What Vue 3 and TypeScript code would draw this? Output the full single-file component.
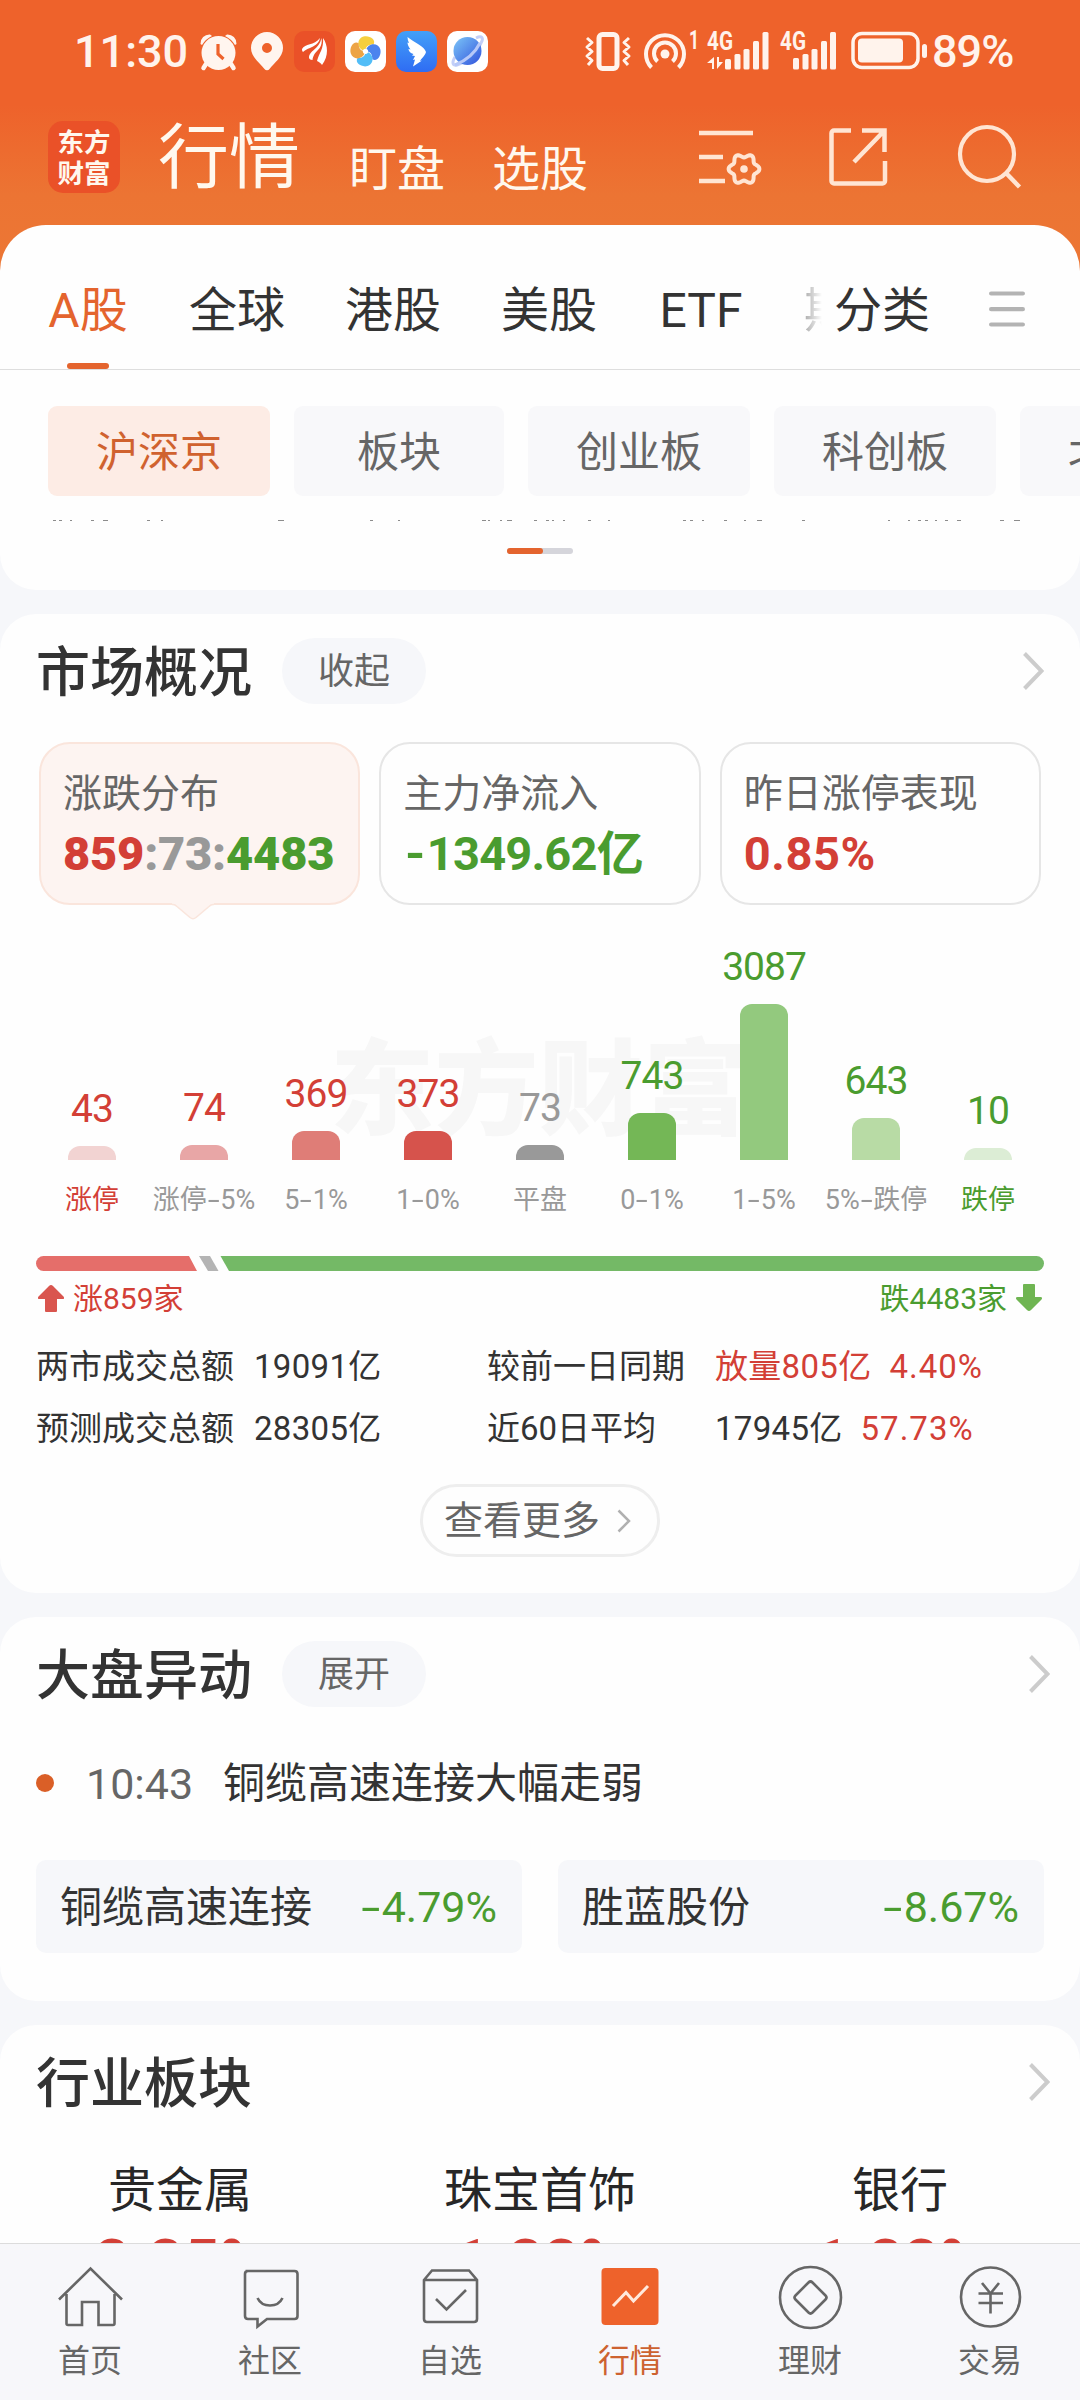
<script setup lang="ts">
interface Bucket {
  value: number
  label: string
  height: number
  fill: string
  tone: string
  labelTone: string
}

const tabs: { name: string; width: number; active?: boolean }[] = [
  { name: 'A股', width: 80, active: true },
  { name: '全球', width: 96 },
  { name: '港股', width: 96 },
  { name: '美股', width: 96 },
  { name: 'ETF', width: 88 },
]

const chips: { name: string; active?: boolean }[] = [
  { name: '沪深京', active: true },
  { name: '板块' },
  { name: '创业板' },
  { name: '科创板' },
  { name: '北交所' },
]

const buckets: Bucket[] = [
  { value: 43, label: '涨停', height: 14, fill: '#f2d3d2', tone: 'up', labelTone: 'up' },
  { value: 74, label: '涨停-5%', height: 15, fill: '#e8a6a6', tone: 'up', labelTone: 'flat' },
  { value: 369, label: '5-1%', height: 29, fill: '#df7d77', tone: 'up', labelTone: 'flat' },
  { value: 373, label: '1-0%', height: 29, fill: '#d6534c', tone: 'up', labelTone: 'flat' },
  { value: 73, label: '平盘', height: 15, fill: '#999999', tone: 'flat', labelTone: 'flat' },
  { value: 743, label: '0-1%', height: 47, fill: '#74b756', tone: 'down', labelTone: 'flat' },
  { value: 3087, label: '1-5%', height: 156, fill: '#93c97e', tone: 'down', labelTone: 'flat' },
  { value: 643, label: '5%-跌停', height: 42, fill: '#b8dba5', tone: 'down', labelTone: 'flat' },
  { value: 10, label: '跌停', height: 12, fill: '#dcedd5', tone: 'down', labelTone: 'down' },
]

const movers = [
  { name: '铜缆高速连接', change: '-4.79%' },
  { name: '胜蓝股份', change: '-8.67%' },
]

const sectors = [
  { name: '贵金属', change: '2.25%' },
  { name: '珠宝首饰', change: '1.22%' },
  { name: '银行', change: '1.22%' },
]

// x offset and width of the ticker fragments peeking out under the chips
const peeks: number[][] = [
  [53, 3], [59, 3], [70, 2], [91, 3], [103, 5], [147, 3], [161, 2], [278, 6], [370, 3], [398, 2],
  [482, 4], [488, 2], [500, 2], [507, 5], [534, 3], [546, 3], [552, 2], [563, 2], [588, 3], [608, 2],
  [683, 3], [690, 3], [702, 2], [724, 3], [744, 2], [757, 5], [802, 3], [888, 2], [908, 2], [918, 3],
  [925, 3], [935, 2], [945, 3], [957, 4], [1000, 4], [1014, 6],
]

// keeps the minus as its own piece so it can be drawn wider than the font's hyphen
const pieces = (text: string): string[] => text.split(/(-)/).filter(Boolean)

// six-lobed outline of the settings gear
const gear = Array.from({ length: 96 }, (_, i) => {
  const a = (i / 96) * Math.PI * 2
  const r = 13.5 + 1.9 * Math.cos(6 * a)
  return `${(744 + r * Math.cos(a)).toFixed(2)},${(169 + r * Math.sin(a)).toFixed(2)}`
}).join(' ')
</script>

<template>
  <div class="screen">
    <div class="status">
      <span class="clock">11:30</span>
      <svg class="status-left" width="296" height="48" viewBox="196 28 296 48">
        <defs>
          <linearGradient id="blue" x1="0" y1="0" x2="0" y2="1">
            <stop offset="0" stop-color="#43a0f8" /><stop offset="1" stop-color="#2f6cf3" />
          </linearGradient>
          <linearGradient id="planet" x1="0" y1="0" x2="1" y2="1">
            <stop offset="0" stop-color="#7cc6f8" /><stop offset="1" stop-color="#3152dc" />
          </linearGradient>
        </defs>
        <g fill="#fff5ef">
          <circle cx="218.500" cy="53" r="17" />
          <path d="M200.500 44a9 9 0 0 1 9.500-9.500l2 1.500a23 23 0 0 0-10 9zM236.500 44a9 9 0 0 0-9.500-9.500l-2 1.500a23 23 0 0 1 10 9z" />
          <path d="M206 64l-2.500 4M231 64l2.500 4" stroke="#fff5ef" stroke-width="4.500" stroke-linecap="round" />
          <path d="M218 44v10l5.500 5" fill="none" stroke="#ee622b" stroke-width="3.200" />
          <path fill-rule="evenodd" d="M267 32a16 16 0 0 0-16 16c0 9 9 15 13.500 21a3 3 0 0 0 5 0C274 63 283 57 283 48a16 16 0 0 0-16-16zm0 11a5 5 0 1 1 0 10 5 5 0 0 1 0-10z" />
        </g>
        <rect x="294" y="31" width="41" height="41" rx="10" fill="#ea5128" />
        <g fill="#fff">
          <path d="M302 49c3-6 12-3 18-11-1 6-6 8-10 10-3 1-5 2-7 4-1-1-1-2-1-3z" />
          <path d="M309 58c0-8 10-8 12.500-20 1.500 9-4 12-7 16-1 2-2 4-2 6-2 0-3-1-3.500-2z" />
          <path d="M317 61c2-8 7-12 6-23 5 7 6 18-1 27-1-2-3-3-5-4z" />
        </g>
        <rect x="345" y="31" width="41" height="41" rx="10" fill="#fff" />
        <g>
          <path id="petal" d="M365.500 51c-8-1-10-12-2-14.500 6-1.500 13 3 10 8-4 0-8 1-8 6.500z" fill="#f6cf3e" />
          <path d="M365.500 51c-8-1-10-12-2-14.500 6-1.500 13 3 10 8-4 0-8 1-8 6.500z" fill="#4b83ee" transform="rotate(90 365.500 51.300)" />
          <path d="M365.500 51c-8-1-10-12-2-14.500 6-1.500 13 3 10 8-4 0-8 1-8 6.500z" fill="#52bdf7" transform="rotate(180 365.500 51.300)" />
          <path d="M365.500 51c-8-1-10-12-2-14.500 6-1.500 13 3 10 8-4 0-8 1-8 6.500z" fill="#eda444" transform="rotate(270 365.500 51.300)" />
        </g>
        <circle cx="365.500" cy="51.300" r="2.600" fill="#fff" />
        <rect x="396" y="31" width="41" height="41" rx="10" fill="url(#blue)" />
        <path d="M407.500 37c7 6 17 9 18.500 15-1 4-5 7-6 9l2-.500-9 6 2-7-2 .500 2-4-3-.500 1.500-1.500c-4-1-5-4-5-5l2 .500c-2-3-3-5-3-7l1.500.500c-1-2-1.500-4-1.500-6z" fill="#fff" />
        <rect x="447" y="31" width="41" height="41" rx="10" fill="#fff" />
        <path d="M476 38c6-3 8 0 5 5-5 10-15 19-24 22-5 1-5-3-2-8" fill="none" stroke="#c3cff8" stroke-width="3" />
        <circle cx="467.500" cy="51" r="14" fill="url(#planet)" />
        <path d="M480 43c-5 10-15 18-25 22" fill="none" stroke="#b7c8f8" stroke-width="3" />
      </svg>
      <svg class="status-right" width="350" height="48" viewBox="580 28 350 48">
        <g fill="none" stroke="#fff3ec">
          <rect x="599" y="34.500" width="18" height="34" rx="3.500" stroke-width="5" />
          <path d="M587 38l5 4.500-5 4.500 5 4.500-5 4.500 5 4.500-4 4.500M629 38l-5 4.500 5 4.500-5 4.500 5 4.500-5 4.500 4 4.500" stroke-width="3" stroke-linejoin="round" />
          <path d="M651.500 67.500a19 19 0 1 1 27 0M657.500 61.500a11 11 0 1 1 15 0" stroke-width="4" />
          <rect x="853" y="33.500" width="65" height="34" rx="9" stroke-width="3.500" />
        </g>
        <g fill="#fff3ec">
          <circle cx="665" cy="54" r="4.500" />
          <rect x="858" y="38.500" width="45" height="24" rx="4" />
          <rect x="922" y="44" width="5" height="14" rx="2.500" />
          <rect x="725" y="59" width="6" height="10.500" rx="1.500" /><rect x="734.500" y="54" width="6" height="15.500" rx="1.500" /><rect x="743.500" y="49" width="6" height="20.500" rx="1.500" /><rect x="753" y="41" width="6" height="28.500" rx="1.500" /><rect x="762.500" y="32" width="6" height="37.500" rx="1.500" />
          <rect x="793" y="58" width="6" height="11.500" rx="1.500" /><rect x="802.500" y="54" width="6" height="15.500" rx="1.500" /><rect x="811.500" y="49" width="6" height="20.500" rx="1.500" /><rect x="821" y="41" width="6" height="28.500" rx="1.500" /><rect x="830" y="32" width="6" height="37.500" rx="1.500" />
          <path d="M714 57v12h-2v-6h-5zM717 57v12l6-7h-4v-5z" />
          <text x="707" y="50" class="net" textLength="26" lengthAdjust="spacingAndGlyphs">4G</text>
          <text x="780" y="50" class="net" textLength="26" lengthAdjust="spacingAndGlyphs">4G</text>
          <text x="689" y="49" class="net" textLength="10" lengthAdjust="spacingAndGlyphs">1</text>
        </g>
      </svg>
      <span class="battery">89%</span>
    </div>

    <header class="header">
      <div class="logo"><span>东方</span><span>财富</span></div>
      <span class="title">行情</span>
      <span class="subtitle">盯盘</span>
      <span class="subtitle second">选股</span>
      <svg class="tools" width="326" height="66" viewBox="697 123 326 66" fill="none" stroke="#ffe5d3" stroke-width="4.500">
        <path d="M699 133h54M699 157h24M699 181h26" />
        <polygon :points="gear" stroke-width="4" stroke-linejoin="round" />
        <circle cx="744" cy="169" r="3.800" fill="#ffe5d3" stroke="none" />
        <path d="M851 130.500h-17a2.500 2.500 0 0 0-2.500 2.500v48a2.500 2.500 0 0 0 2.500 2.500h48.500a2.500 2.500 0 0 0 2.500-2.500v-20M862 130.500h22.500v21.500M884 131l-30 31" />
        <circle cx="987" cy="154" r="27" stroke-width="4.200" />
        <path d="M1006 173l13.500 14" />
      </svg>
    </header>

    <main class="main">
      <section class="card top">
        <nav class="tabs">
          <span v-for="t in tabs" :key="t.name" class="tab" :class="{ active: t.active }" :style="{ width: t.width + 'px' }">{{ t.name }}</span>
          <span class="cut">期</span>
          <span class="classify">分类</span>
          <svg width="36" height="36" viewBox="0 0 36 36" stroke="#b3b3b3" stroke-width="4.200" stroke-linecap="round">
            <path d="M2.100 2.500h31.800M2.100 18.200h31.800M2.100 33.500h31.800" />
          </svg>
        </nav>
        <div class="chips">
          <span v-for="c in chips" :key="c.name" class="chip" :class="{ active: c.active }">{{ c.name }}</span>
        </div>
        <svg class="peek" width="1080" height="2" viewBox="0 0 1080 2">
          <rect v-for="p in peeks" :key="p[0]" :x="p[0]" y="0" :width="p[1]" height="1" fill="#8c8c8c" />
        </svg>
        <div class="pager"><i></i></div>
      </section>

      <section class="card market">
        <div class="head">
          <h2>市场概况</h2>
          <span class="pill">收起</span>
          <svg class="chev inset" width="21" height="38" viewBox="0 0 21 38"><path d="M1.500 1.500L18.500 19 1.500 36.500" /></svg>
        </div>
        <div class="stats">
          <div class="stat on">
            <p>涨跌分布</p>
            <strong><b class="up">859</b><b class="flat">:73:</b><b class="down">4483</b></strong>
            <svg class="tail" width="42" height="17" viewBox="0 0 42 17">
              <path d="M0 0h42v1.500h-1c-2 0-3 1-4 2L24 14.500q-3 2.500-6 0L5 3.500c-1-1-2-2-4-2H0z" fill="#fdf4f1" />
              <path d="M0 1.500h1c2 0 3 1 4 2L18 14.500q3 2.500 6 0L37 3.500c1-1 2-2 4-2h1" fill="none" stroke="#fae5dc" stroke-width="1.500" />
            </svg>
          </div>
          <div class="stat">
            <p>主力净流入</p>
            <strong class="down flow"><span v-for="(p, i) in pieces('-1349.62亿')" :key="i" :class="{ dash: p === '-' }">{{ p }}</span></strong>
          </div>
          <div class="stat"><p>昨日涨停表现</p><strong class="up rate">0.85%</strong></div>
        </div>

        <div class="chart">
          <div class="watermark">东方财富</div>
          <div v-for="b in buckets" :key="b.label" class="col">
            <span class="num" :class="b.tone">{{ b.value }}</span>
            <i class="bar" :style="{ height: b.height + 'px', background: b.fill }"></i>
            <span class="lab" :class="b.labelTone"><span v-for="(p, i) in pieces(b.label)" :key="i" :class="{ dash: p === '-' }">{{ p }}</span></span>
          </div>
        </div>

        <svg class="ratio" width="1008" height="15" viewBox="0 0 1008 15">
          <path d="M7.500 0H153l8 15H7.500a7.500 7.500 0 0 1 0-15z" fill="#e56e6a" />
          <path d="M163 0h11l8.500 15H172z" fill="#b4b4b4" />
          <path d="M184.500 0h816a7.500 7.500 0 0 1 0 15H193z" fill="#74b966" />
        </svg>
        <div class="sides">
          <span class="side up">
            <svg width="26" height="27" viewBox="0 0 26 27"><path d="M13 0q1 0 2 1l10.500 10.500q1.500 2.500-1 2.500H19v12q0 1-1 1H8q-1 0-1-1V14H1.500q-2.500 0-1-2.500L11 1q1-1 2-1z" fill="#d9554e" /></svg>
            涨859家
          </span>
          <span class="side down">
            跌4483家
            <svg width="26" height="27" viewBox="0 0 26 27"><path d="M13 27q-1 0-2-1L.500 15.500Q-1 13 1.500 13H7V1q0-1 1-1h10q1 0 1 1v12h5.500q2.500 0 1 2.500L15 26q-1 1-2 1z" fill="#6fb552" /></svg>
          </span>
        </div>

        <div class="totals">
          <span>两市成交总额</span><span class="v">19091亿</span><span>较前一日同期</span><span class="v up">放量805亿<em>4.40%</em></span>
          <span>预测成交总额</span><span class="v">28305亿</span><span>近60日平均</span><span class="v">17945亿<em class="up">57.73%</em></span>
        </div>

        <div class="more">
          查看更多
          <svg width="14" height="24" viewBox="0 0 14 24" fill="none" stroke="#b0b0b0" stroke-width="2.500"><path d="M1.500 1.500L12 12 1.500 22.500" /></svg>
        </div>
      </section>

      <section class="card moves">
        <div class="head">
          <h2>大盘异动</h2>
          <span class="pill">展开</span>
          <svg class="chev" width="21" height="38" viewBox="0 0 21 38"><path d="M1.500 1.500L18.500 19 1.500 36.500" /></svg>
        </div>
        <div class="event"><i></i><time>10:43</time><span>铜缆高速连接大幅走弱</span></div>
        <div class="movers">
          <div v-for="m in movers" :key="m.name" class="mover">
            <span>{{ m.name }}</span>
            <span class="down pct"><span v-for="(p, i) in pieces(m.change)" :key="i" :class="{ dash: p === '-' }">{{ p }}</span></span>
          </div>
        </div>
      </section>

      <section class="card sectors">
        <div class="head">
          <h2>行业板块</h2>
          <svg class="chev" width="21" height="38" viewBox="0 0 21 38"><path d="M1.500 1.500L18.500 19 1.500 36.500" /></svg>
        </div>
        <div class="sector-row">
          <div v-for="s in sectors" :key="s.name" class="sector"><span>{{ s.name }}</span><b>{{ s.change }}</b></div>
        </div>
      </section>
    </main>

    <nav class="bottom">
      <a class="item">
        <svg viewBox="0 0 70 70"><path d="M4 39.500L35.500 8.500 67 39.500M11.500 34v29.500q0 1.500 1.500 1.500h14V42h16.500v23H58q1.500 0 1.500-1.500V34" /></svg>
        <span>首页</span>
      </a>
      <a class="item">
        <svg viewBox="0 0 70 70"><path d="M10.500 11h49q3 0 3 3v42q0 3-3 3H32l-9.500 7.500V59h-9.500q-3 0-3-3V14q0-3 3-3M22.500 38q3.500 7.500 12.500 7.500t12.500-7.500" /></svg>
        <span>社区</span>
      </a>
      <a class="item">
        <svg viewBox="0 0 70 70"><path d="M9 20l8-9.500h37l8 9.500v39q0 3-3 3H12q-3 0-3-3V20zh53M21 39l10.500 10.500L51 30" /></svg>
        <span>自选</span>
      </a>
      <a class="item current">
        <svg viewBox="0 0 70 70"><rect x="6.500" y="8" width="57" height="57" rx="4" fill="#ee622b" stroke="none" /><path d="M18 46l13-13.500 7.500 8.500L53 26" stroke="#ffe9dd" stroke-width="3" /></svg>
        <span>行情</span>
      </a>
      <a class="item">
        <svg viewBox="0 0 70 70"><circle cx="35.500" cy="37.500" r="30.500" /><path d="M33.500 22.500q2-2 4 0L50.500 35.500q2 2 0 4L37.500 52.500q-2 2-4 0L20.500 39.500q-2-2 0-4z" /></svg>
        <span>理财</span>
      </a>
      <a class="item">
        <svg viewBox="0 0 70 70"><circle cx="35.500" cy="37" r="29.500" /><path d="M27 23l8.500 10.500L44 23M23.500 33.500H48M23.500 43H48M35.500 33.500V53.500" /></svg>
        <span>交易</span>
      </a>
    </nav>
  </div>
</template>

<style>
body {
  background: #f6f7fa;
}
</style>

<style scoped>
.screen {
  width: 1080px;
  height: 2400px;
  overflow: hidden;
  display: flex;
  flex-direction: column;
  box-sizing: border-box;
  font-family: Roboto, 'Noto Sans CJK SC', sans-serif;
  color: #333;
  white-space: nowrap;
  background: linear-gradient(#ee622b 0, #ee622b 105px, #ec7433 195px, #ec7735 280px) no-repeat 0 0 / 100% 280px, #f6f7fa;
}
.screen * {
  box-sizing: border-box;
}
.up { color: #d33f36; }
.down { color: #4a9c2f; }
.flat { color: #999; }
.dash {
  display: inline-block;
  width: 0.5em;
  text-align: center;
  transform: scaleX(1.6);
}

.status {
  height: 120px;
  flex: none;
  display: flex;
  align-items: flex-start;
  padding: 28px 0 0 74px;
  color: #fff3ec;
  font-size: 45px;
  font-weight: 500;
  line-height: 48px;
}
.clock { width: 122px; }
.status-right { margin-left: 88px; }
.battery { margin-left: 2px; letter-spacing: -1px; }
.net { font-size: 25px; font-weight: 700; }

.header {
  height: 105px;
  flex: none;
  display: flex;
  align-items: flex-start;
  padding-left: 48px;
  color: #fff8ee;
}
.logo {
  width: 72px;
  height: 72px;
  margin-top: 1px;
  border-radius: 15px;
  background: #ea5128;
  display: flex;
  flex-direction: column;
  align-items: center;
  padding-top: 6px;
  font-size: 26.500px;
  font-weight: 700;
  line-height: 31px;
}
.title { font-size: 71px; line-height: 72px; margin: 2px 0 0 38px; }
.subtitle { font-size: 48px; line-height: 48px; margin: 26px 0 0 49px; }
.subtitle.second { margin-left: 47px; }
.tools { margin: 3px 0 0 109px; }

.main {
  flex: 1;
  min-height: 0;
  overflow: hidden;
}
.card {
  background: #fefefe;
  border-radius: 36px;
  margin-bottom: 24px;
}
.top {
  height: 365px;
  border-radius: 46px 46px 36px 36px;
}
.tabs {
  height: 145px;
  border-bottom: 1px solid #dedede;
  display: flex;
  align-items: flex-start;
  gap: 60px;
  padding: 26px 54px 0 48px;
  font-size: 48px;
  line-height: 120px;
}
.tab {
  flex: none;
  height: 118px;
  display: flex;
  flex-direction: column;
  align-items: center;
}
.tab:nth-child(n + 2) { position: relative; left: 1px; }
.tab.active { color: #e4642e; }
.tab.active::after {
  content: '';
  width: 42px;
  height: 6px;
  border-radius: 3px;
  background: #e4642e;
  margin-top: -8px;
  flex: none;
}
.cut {
  width: 18px;
  height: 118px;
  overflow: hidden;
  flex: none;
  color: #aaa;
  -webkit-mask-image: linear-gradient(90deg, #000, transparent);
  mask-image: linear-gradient(90deg, #000, transparent);
}
.classify { margin-left: -48px; }
.tabs svg { margin: 40px 0 0 -1px; flex: none; }
.chips {
  margin-top: 36px;
  padding-left: 48px;
  display: flex;
  gap: 24px;
  overflow: hidden;
}
.chip {
  flex: none;
  height: 90px;
  padding: 0 48px;
  border-radius: 9px;
  background: #f8f8fa;
  color: #666;
  font-size: 42px;
  line-height: 93px;
}
.chip:nth-child(2) { padding: 0 63px; }
.chip.active { background: #fdece5; color: #d0622f; }
.peek { display: block; margin-top: 24px; }
.pager {
  width: 66px;
  height: 6px;
  border-radius: 3px;
  background: #d5d5db;
  margin: 26px auto 0;
}
.pager i {
  display: block;
  width: 36px;
  height: 6px;
  border-radius: 3px;
  background: #e4642e;
}

.market { height: 979px; padding: 24px 36px 0; }
.head { display: flex; align-items: center; height: 66px; }
h2 {
  margin: 0;
  font-size: 54px;
  line-height: 66px;
  font-weight: 500;
  padding-top: 5px;
}
.pill {
  width: 144px;
  height: 66px;
  border-radius: 33px;
  margin-left: 30px;
  background: #f6f7fa;
  color: #666;
  text-align: center;
  font-size: 36px;
  line-height: 69px;
}
.chev {
  margin-left: auto;
  margin-right: -6px;
  fill: none;
  stroke: #ccc;
  stroke-width: 4;
}
.chev.inset { margin-right: 0; }
.stats {
  display: grid;
  grid-template-columns: repeat(3, 1fr);
  gap: 19px;
  margin: 38px 3px 0;
}
.stat {
  position: relative;
  height: 163px;
  border: 2px solid #e6e6e6;
  border-radius: 31px;
  padding: 29px 0 0 22px;
}
.stat.on { background: #fdf4f1; border-color: #fae5dc; }
.stat p { margin: 0; font-size: 39px; line-height: 42px; color: #666; }
.stat strong { display: block; font-size: 47px; line-height: 50px; margin-top: 14px; letter-spacing: -0.2px; }
.stat .flow { letter-spacing: -0.8px; }
.flow .dash { transform: scaleX(1.1); }
.stat .rate { letter-spacing: 0.6px; }
.tail { position: absolute; left: 131px; top: 159px; }

.chart {
  position: relative;
  height: 310px;
  display: grid;
  grid-template-columns: repeat(9, 112px);
}
.watermark {
  position: absolute;
  left: 294px;
  top: 129px;
  font-size: 104px;
  line-height: 116px;
  font-weight: 900;
  letter-spacing: 0.5px;
  color: #f7f7f7;
}
.col {
  position: relative;
  display: flex;
  flex-direction: column;
  align-items: center;
  justify-content: flex-end;
}
.num { font-size: 39px; line-height: 40px; margin-bottom: 17px; letter-spacing: -1px; }
.bar { width: 48px; border-radius: 12px 12px 0 0; flex: none; }
.lab { font-size: 27px; line-height: 30px; margin-top: 25px; }

.ratio { display: block; margin-top: 41px; }
.sides {
  display: flex;
  justify-content: space-between;
  height: 50px;
  padding: 0 2px;
  font-size: 30px;
}
.side { display: flex; align-items: center; gap: 9px; }
.side svg { margin-top: 5px; }
.side.down svg { margin-top: 3px; }
.totals {
  display: grid;
  grid-template-columns: 218px 233px 228px 1fr;
  line-height: 62px;
  font-size: 33px;
  margin-top: 15px;
}
.v { letter-spacing: 0.3px; }
em { font-style: normal; margin-left: 18px; letter-spacing: 1px; }
.more {
  width: 240px;
  height: 73px;
  margin: 24px auto 0;
  border: 3px solid #eee;
  border-radius: 37px;
  display: flex;
  align-items: center;
  gap: 17px;
  padding-left: 21px;
  color: #666;
  font-size: 39px;
  line-height: 72px;
}

.moves { height: 384px; padding: 24px 36px 0; }
.event { display: flex; align-items: center; height: 84px; margin-top: 35px; font-size: 42px; line-height: 86px; }
.event i { width: 18px; height: 18px; border-radius: 50%; background: #da5f27; margin-top: -3px; }
.event time { margin-left: 32px; width: 137px; font-size: 43px; color: #666; }
.movers { display: grid; grid-template-columns: 1fr 1fr; gap: 36px; margin-top: 34px; }
.mover {
  height: 93px;
  border-radius: 10px;
  background: #f6f7fa;
  padding: 0 25px 0 24px;
  display: flex;
  justify-content: space-between;
  font-size: 42px;
  line-height: 96px;
}
.pct { font-size: 43px; line-height: 94px; }

.sectors { height: 400px; padding: 24px 0 0; }
.sectors .head { padding: 0 36px; }
.sector-row { display: grid; grid-template-columns: repeat(3, 360px); margin-top: 46px; }
.sector { display: flex; flex-direction: column; align-items: center; color: #272727; font-size: 48px; line-height: 60px; }
.sector b { font-size: 63px; line-height: 70px; font-weight: 500; margin-top: 7px; color: #d33f36; }

.bottom {
  height: 157px;
  flex: none;
  border-top: 1px solid #dcdcdc;
  background: #f7f7fa;
  display: grid;
  grid-template-columns: repeat(6, 180px);
}
.item {
  display: flex;
  flex-direction: column;
  align-items: center;
  padding-top: 16px;
  color: #666;
  font-size: 32px;
  line-height: 40px;
}
.item svg {
  width: 70px;
  height: 70px;
  margin-left: -1px;
  fill: none;
  stroke: #666;
  stroke-width: 2.600;
}
.item span { margin-top: 11px; }
.item.current { color: #cd6230; }
</style>
